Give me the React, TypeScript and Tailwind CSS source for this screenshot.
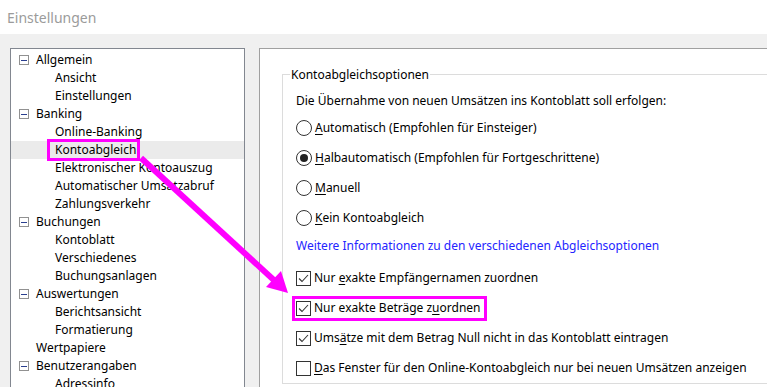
import React from 'react';

/* ── Tree data ── */
interface TreeNode {
  label: string;
  children?: string[];
}

const tree: TreeNode[] = [
  { label: 'Allgemein', children: ['Ansicht', 'Einstellungen'] },
  {
    label: 'Banking',
    children: ['Online-Banking', 'Kontoabgleich', 'Elektronischer Kontoauszug', 'Automatischer Umsatzabruf', 'Zahlungsverkehr'],
  },
  { label: 'Buchungen', children: ['Kontoblatt', 'Verschiedenes', 'Buchungsanlagen'] },
  { label: 'Auswertungen', children: ['Berichtsansicht', 'Formatierung'] },
  { label: 'Wertpapiere' },
  { label: 'Benutzerangaben', children: ['Adressinfo'] },
];

const font = { fontFamily: '"Noto Sans", "Open Sans", sans-serif' };

/* Text with one underlined mnemonic letter */
function Mnemonic({ text, at }: { text: string; at: number }) {
  return (
    <span>
      {text.slice(0, at)}
      <span className="underline underline-offset-2">{text[at]}</span>
      {text.slice(at + 1)}
    </span>
  );
}

function ExpandBox() {
  return (
    <span className="w-[10px] h-[10px] border border-[#919191] bg-white flex items-center justify-center shrink-0">
      <span className="w-[6px] h-px bg-[#2a3f8f]" />
    </span>
  );
}

function Radio({ checked }: { checked?: boolean }) {
  return (
    <span className="w-[16px] h-[16px] rounded-full border border-[#333] bg-white flex items-center justify-center shrink-0">
      {checked && <span className="w-[8px] h-[8px] rounded-full bg-[#222]" />}
    </span>
  );
}

function Checkbox({ checked }: { checked?: boolean }) {
  return (
    <span className="w-[15px] h-[15px] border border-[#333] bg-white flex items-center justify-center shrink-0">
      {checked && (
        <svg width="11" height="9" viewBox="0 0 11 9" fill="none">
          <path d="M1 4.5 L4 7.5 L10 1" stroke="#333" strokeWidth="1.1" />
        </svg>
      )}
    </span>
  );
}

export default function App() {
  return (
    <div className="relative w-[767px] h-[387px] overflow-hidden bg-[#f0f0f0] text-black" style={font}>
      {/* ── Titel ── */}
      <div className="h-[34px] bg-white flex items-center pl-[7px] text-[14px] text-[#9b9b9b]">Einstellungen</div>

      <div className="flex pt-[14px] pl-[10px] gap-[14px]">
        {/* ── Baum ── */}
        <div className="w-[235px] h-[400px] shrink-0 bg-white border border-[#828790] pt-[2px] text-[12px]">
          {tree.map((node) => (
            <div key={node.label}>
              <div className="h-[18px] flex items-center pl-[8px] gap-[7px]">
                {node.children ? <ExpandBox /> : <span className="w-[10px] shrink-0" />}
                <span>{node.label}</span>
              </div>
              {node.children?.map((c) => (
                <div
                  key={c}
                  className={`h-[18px] flex items-center pl-[44px] ${c === 'Kontoabgleich' ? 'bg-[#ebebeb]' : ''}`}
                >
                  {c === 'Kontoabgleich' ? (
                    <span className="relative">
                      {c}
                      <span className="absolute -left-[8px] -top-[2px] w-[93px] h-[22px] border-[3px] border-[#ff00ff]" />
                    </span>
                  ) : (
                    c
                  )}
                </div>
              ))}
            </div>
          ))}
        </div>

        {/* ── Optionen ── */}
        <div className="flex-1 h-[400px] bg-white border-l border-t border-[#a0a0a0] pt-[25px] pl-[22px]">
          <div className="relative w-[520px] h-[310px] border border-[#dcdcdc] pt-[16px] pl-[13px] text-[12px]">
            <span className="absolute -top-[9px] left-[7px] bg-white px-px">Kontoabgleichsoptionen</span>

            <div className="h-[20px] flex items-center">Die Übernahme von neuen Umsätzen ins Kontoblatt soll erfolgen:</div>

            <div className="mt-[2px]">
              {[
                { t: 'Automatisch (Empfohlen für Einsteiger)', c: false },
                { t: 'Halbautomatisch (Empfohlen für Fortgeschrittene)', c: true },
                { t: 'Manuell', c: false },
                { t: 'Kein Kontoabgleich', c: false },
              ].map((r) => (
                <div key={r.t} className="h-[30px] flex items-center gap-[3px]">
                  <Radio checked={r.c} />
                  <Mnemonic text={r.t} at={0} />
                </div>
              ))}
            </div>

            <div className="h-[26px] flex items-center text-[#2424ff]">
              Weitere Informationen zu den verschiedenen Abgleichsoptionen
            </div>

            <div className="mt-[4px]">
              <div className="h-[30px] flex items-center gap-[3px]">
                <Checkbox checked />
                <Mnemonic text="Nur exakte Empfängernamen zuordnen" at={4} />
              </div>
              <div className="relative h-[30px] flex items-center gap-[3px]">
                <Checkbox checked />
                <Mnemonic text="Nur exakte Beträge zuordnen" at={20} />
                <span className="absolute -left-[4px] top-[3px] w-[195px] h-[25px] border-[3px] border-[#ff00ff]" />
              </div>
              <div className="h-[30px] flex items-center gap-[3px]">
                <Checkbox checked />
                <Mnemonic text="Umsätze mit dem Betrag Null nicht in das Kontoblatt eintragen" at={3} />
              </div>
              <div className="h-[30px] flex items-center gap-[3px]">
                <Checkbox />
                <Mnemonic text="Das Fenster für den Online-Kontoabgleich nur bei neuen Umsätzen anzeigen" at={0} />
              </div>
            </div>
          </div>
        </div>
      </div>

      {/* ── Pfeil ── */}
      <svg className="absolute left-0 top-0 pointer-events-none" width="767" height="387">
        <line x1="141" y1="158" x2="276" y2="282" stroke="#ff00ff" strokeWidth="6" />
        <polygon points="288,293 266,287 281,271" fill="#ff00ff" />
      </svg>
    </div>
  );
}
